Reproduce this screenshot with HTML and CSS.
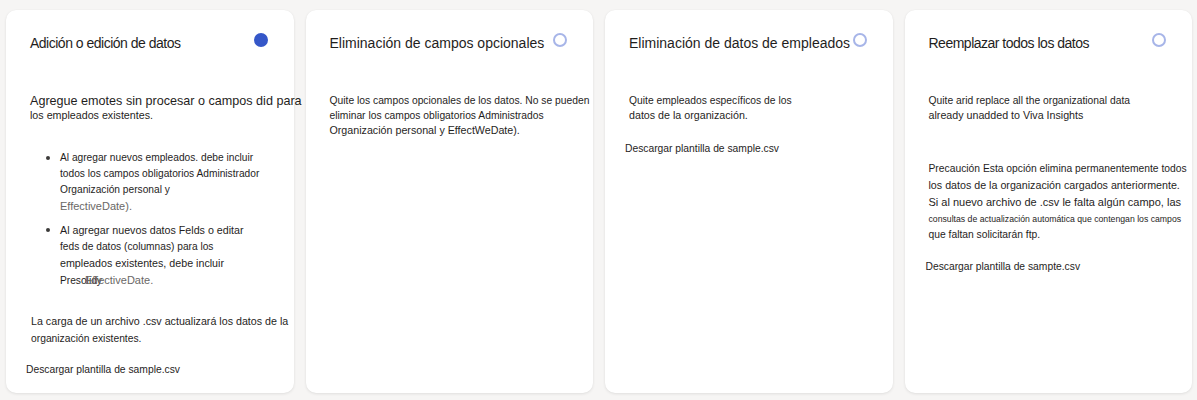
FILE: index.html
```html
<!DOCTYPE html>
<html lang="es">
<head>
<meta charset="utf-8">
<title>Opciones de carga</title>
<link rel="stylesheet" href="styles.css">
</head>
<body>
<main class="options">
  <section class="card">
    <div class="card-head">
      <h2 class="title title-tight">Adición o edición de datos</h2>
      <span class="radio radio-on"></span>
    </div>
    <p class="intro intro-lg"><span class="big">Agregue emotes sin procesar o campos did para</span><br>los empleados existentes.</p>
    <ul class="bullets">
      <li><span class="dot"></span><span class="li-text">Al agregar nuevos empleados. debe incluir<br>todos los campos obligatorios Administrador<br>Organización personal y<br><span class="muted s11">EffectiveDate).</span></span></li>
      <li><span class="dot"></span><span class="li-text"><span class="s107">Al agregar nuevos datos Felds o editar</span><br>feds de datos (columnas) para los<br><span class="s107">empleados existentes, debe incluir</span><br>Presolidy<span class="muted s11 overlap">EffectiveDate.</span></span></li>
    </ul>
    <p class="note"><span class="s107">La carga de un archivo .csv actualizará los datos de la</span><br>organización existentes.</p>
    <a class="download download-1">Descargar plantilla de sample.csv</a>
  </section>

  <section class="card">
    <div class="card-head">
      <h2 class="title">Eliminación de campos opcionales</h2>
      <span class="radio"></span>
    </div>
    <p class="intro">Quite los campos opcionales de los datos. No se pueden<br>eliminar los campos obligatorios Administrados<br><span class="s107">Organización personal y EffectWeDate).</span></p>
  </section>

  <section class="card">
    <div class="card-head">
      <h2 class="title">Eliminación de datos de empleados</h2>
      <span class="radio"></span>
    </div>
    <p class="intro">Quite empleados específicos de los<br><span class="s107">datos de la organización.</span></p>
    <a class="download download-3">Descargar plantilla de sample.csv</a>
  </section>

  <section class="card">
    <div class="card-head">
      <h2 class="title title-tight">Reemplazar todos los datos</h2>
      <span class="radio"></span>
    </div>
    <p class="intro">Quite arid replace all the organizational data<br><span class="s107">already unadded to Viva Insights</span></p>
    <p class="warn">Precaución Esta opción elimina permanentemente todos<br><span class="s107">los datos de la organización cargados anteriormente.</span><br><span class="s11">Si al nuevo archivo de .csv le falta algún campo, las</span><br><span class="w-sm">consultas de actualización automática que contengan los campos</span><br>que faltan solicitarán ftp.</p>
    <a class="download download-4">Descargar plantilla de sampte.csv</a>
  </section>
</main>
</body>
</html>
```

FILE: styles.css
```css
html, body {
  margin: 0;
  padding: 0;
  background: #f6f5f4;
  height: 100%;
}

body {
  font-family: "Liberation Sans", Arial, sans-serif;
  color: #1f1e1d;
}

.options {
  display: flex;
  gap: 12px;
  padding: 10px 5px 7px 6px;
  height: 383px;
}

.card {
  flex: 1 1 0;
  min-width: 0;
  background: #ffffff;
  border-radius: 10px;
  box-shadow: 0 1px 3px rgba(0, 0, 0, 0.09), 0 0 1px rgba(0, 0, 0, 0.05);
  padding: 24px 24px 0 24px;
  display: flex;
  flex-direction: column;
  align-items: flex-start;
}

.card-head {
  display: flex;
  align-items: center;
  justify-content: space-between;
  align-self: stretch;
  height: 18px;
  padding-right: 2px;
}

.title {
  margin: 0;
  font-size: 14px;
  font-weight: 400;
  line-height: 18px;
  white-space: nowrap;
}

.title-tight {
  letter-spacing: -0.5px;
}

.radio {
  width: 14px;
  height: 14px;
  border-radius: 50%;
  box-sizing: border-box;
  border: 2px solid #a7b5e8;
  margin-top: -6px;
  flex: none;
}

.radio-on {
  background: #3557c8;
  border-color: #3557c8;
}

.intro {
  margin: 41px 0 0 0;
  font-size: 10.3px;
  line-height: 15px;
  white-space: nowrap;
}

.intro-lg {
  margin-top: 42px;
  font-size: 10.7px;
  line-height: 14px;
}

.big {
  font-size: 12.6px;
}

.s11 { font-size: 11px; }
.s107 { font-size: 10.7px; }

.bullets {
  list-style: none;
  margin: 28px 0 0 0;
  padding: 0 0 0 16px;
  font-size: 10.2px;
  line-height: 16px;
  white-space: nowrap;
}

.bullets li {
  display: flex;
  align-items: flex-start;
}

.bullets li + li {
  margin-top: 7px;
}

.dot {
  flex: none;
  width: 4px;
  height: 4px;
  border-radius: 50%;
  background: #3b3a39;
  margin: 6px 10px 0 0;
}

.muted {
  color: #6a6866;
}

.overlap {
  margin-left: -17px;
}

.note {
  margin: 24px 0 0 1px;
  font-size: 10.3px;
  line-height: 17px;
  white-space: nowrap;
}

.download {
  display: block;
  margin-left: -4px;
  font-size: 10.3px;
  line-height: 15px;
  white-space: nowrap;
  color: #1f1e1d;
}

.download-1 { margin-top: 15px; }
.download-3 { margin-top: 18px; }
.download-4 { margin-top: 16px; margin-left: -3px; }

.warn {
  margin: 38px 0 0 0;
  font-size: 10.3px;
  line-height: 16px;
  white-space: nowrap;
}

.w-sm {
  font-size: 8.7px;
}
```
